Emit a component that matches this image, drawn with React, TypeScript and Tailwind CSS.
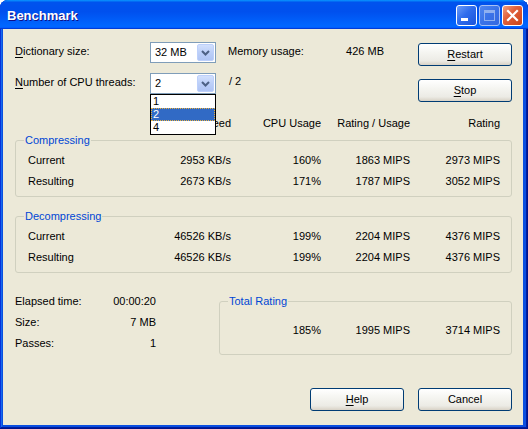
import React from "react";

function Chevron() {
  return (
    <svg width="9" height="6" viewBox="0 0 9 6">
      <path d="M1 1 L4.5 4.5 L8 1" stroke="#4d6185" strokeWidth="2" fill="none" />
    </svg>
  );
}

function Combo({ value, children }: { value: string; children?: React.ReactNode }) {
  return (
    <div className="relative w-[66px] h-[21px]">
      <div className="w-[66px] h-[21px] border border-[#7f9db9] bg-white flex items-stretch p-[1px]">
        <div className="flex-1 pl-[3px] flex items-center text-[11px] leading-[13px] text-black">{value}</div>
        <div className="w-[17px] rounded-[2px] border border-[#bdd0fb] bg-[linear-gradient(180deg,#d2e0fd,#bccff8_50%,#afc4f4)] flex items-center justify-center">
          <Chevron />
        </div>
      </div>
      {children}
    </div>
  );
}

function XPButton({ children }: { children: React.ReactNode }) {
  return (
    <div className="w-[94px] h-[23px] rounded-[3px] border border-[#003c74] bg-[linear-gradient(180deg,#ffffff,#f5f5f1_40%,#ecebe5_80%,#d8d2c6)] flex items-center justify-center text-[11px] leading-[13px] text-black">
      {children}
    </div>
  );
}

function U({ c }: { c: string }) {
  return <span className="underline underline-offset-[2px]">{c}</span>;
}

function DataRow({ label, v }: { label: string; v: string[] }) {
  return (
    <div className="flex items-center h-[21px] text-[11px] leading-[13px]">
      <div className="w-[135px] pl-[12px]">{label}</div>
      <div className="w-[80px] text-right">{v[0]}</div>
      <div className="w-[90px] text-right">{v[1]}</div>
      <div className="w-[89px] text-right">{v[2]}</div>
      <div className="w-[90px] text-right">{v[3]}</div>
    </div>
  );
}

function Group({ title, className, children }: { title: string; className?: string; children: React.ReactNode }) {
  return (
    <fieldset className={`border border-[#d0d0bf] rounded-[3px] ${className ?? ""}`}>
      <legend className="ml-[8px] px-[1px] text-[11px] leading-[14px] text-[#0046d5]">{title}</legend>
      {children}
    </fieldset>
  );
}

export default function App() {
  return (
    <div className="w-[528px] h-[429px] flex flex-col rounded-t-[8px] overflow-hidden bg-[#0a4fe0] shadow-[inset_-1px_-1px_#00138c,inset_1px_1px_#0831d9,inset_-2px_-2px_#001ea0,inset_2px_2px_#166aee] font-['Liberation_Sans',Arial,sans-serif] text-black">
      {/* Title bar */}
      <div className="h-[29px] shrink-0 flex items-start bg-[linear-gradient(180deg,#0997ff,#0053ee_8%,#0050ee_40%,#0066ff_88%,#0066ff_93%,#005bff_95%,#003dd7_96%,#003dd7)]">
        <div className="pl-[7px] pt-[8px] text-white font-bold text-[13px] leading-[15px] [text-shadow:1px_1px_0_#0f1089]">Benchmark</div>
        <div className="ml-auto flex gap-[2px] pt-[5px] pr-[5px]">
          <div className="w-[21px] h-[21px] rounded-[3px] border border-white bg-[linear-gradient(135deg,#6b9cf8,#2f6cec_45%,#1b54db)]">
            <svg width="19" height="19" viewBox="0 0 19 19">
              <rect x="4" y="12" width="7" height="3" fill="#ffffff" />
            </svg>
          </div>
          <div className="w-[21px] h-[21px] rounded-[3px] border border-[#a8c0f4] bg-[linear-gradient(135deg,#4f86f0,#3a72e8_50%,#3468e0)]">
            <svg width="19" height="19" viewBox="0 0 19 19">
              <rect x="4.5" y="4.5" width="10" height="10" fill="none" stroke="#8fb0f0" strokeWidth="1" />
              <rect x="4" y="4" width="11" height="3" fill="#8fb0f0" />
            </svg>
          </div>
          <div className="w-[21px] h-[21px] rounded-[3px] border border-white bg-[linear-gradient(135deg,#f0a080,#e0603c_40%,#cc4418)]">
            <svg width="19" height="19" viewBox="0 0 19 19">
              <path d="M5 5 L14 14 M14 5 L5 14" stroke="#ffffff" strokeWidth="2.2" strokeLinecap="square" />
            </svg>
          </div>
        </div>
      </div>

      {/* Body */}
      <div className="flex-1 flex flex-col ml-[3px] mr-[5px] mb-[4px] bg-[#ece9d8] pl-[12px] pr-[11px] pt-[13px] text-[11px] leading-[13px]">
        {/* Row 1 */}
        <div className="flex items-start h-[31px]">
          <div className="w-[135px] mt-[3px]">
            <U c="D" />ictionary size:
          </div>
          <Combo value="32 MB" />
          <div className="ml-[12px] w-[156px] mt-[3px] flex justify-between">
            <span>Memory usage:</span>
            <span>426 MB</span>
          </div>
          <div className="ml-auto mt-[1px]">
            <XPButton>
              <span>
                <U c="R" />estart
              </span>
            </XPButton>
          </div>
        </div>
        {/* Row 2 */}
        <div className="flex items-start h-[30px] relative z-10">
          <div className="w-[135px] mt-[3px]">
            <U c="N" />umber of CPU threads:
          </div>
          <Combo value="2">
            <div className="absolute left-0 top-[21px] w-[66px] border border-black bg-white">
              <div className="h-[13px] pl-[2px] leading-[13px]">1</div>
              <div className="h-[13px] pl-[1px] leading-[11px] bg-[#316ac5] text-white border border-dotted border-[#e8b040]">2</div>
              <div className="h-[13px] pl-[2px] leading-[13px]">4</div>
            </div>
          </Combo>
          <div className="ml-[13px] mt-[2px]">/ 2</div>
          <div className="ml-auto mt-[6px]">
            <XPButton>
              <span>
                <U c="S" />top
              </span>
            </XPButton>
          </div>
        </div>
        {/* Header */}
        <div className="flex items-center h-[13px] mt-[14px]">
          <div className="w-[136px]"></div>
          <div className="w-[80px] text-right">Speed</div>
          <div className="w-[90px] text-right">CPU Usage</div>
          <div className="w-[89px] text-right">Rating / Usage</div>
          <div className="w-[90px] text-right">Rating</div>
        </div>
        {/* Compressing */}
        <Group title="Compressing" className="mt-[3px]">
          <div className="pt-[3px] pb-[4px]">
            <DataRow label="Current" v={["2953 KB/s", "160%", "1863 MIPS", "2973 MIPS"]} />
            <DataRow label="Resulting" v={["2673 KB/s", "171%", "1787 MIPS", "3052 MIPS"]} />
          </div>
        </Group>
        {/* Decompressing */}
        <Group title="Decompressing" className="mt-[12px]">
          <div className="pt-[3px] pb-[4px]">
            <DataRow label="Current" v={["46526 KB/s", "199%", "2204 MIPS", "4376 MIPS"]} />
            <DataRow label="Resulting" v={["46526 KB/s", "199%", "2204 MIPS", "4376 MIPS"]} />
          </div>
        </Group>
        {/* Bottom section */}
        <div className="flex items-start mt-[18px]">
          <div className="w-[141px] flex flex-col">
            <div className="h-[21px] flex items-center justify-between">
              <span>Elapsed time:</span>
              <span>00:00:20</span>
            </div>
            <div className="h-[21px] flex items-center justify-between">
              <span>Size:</span>
              <span>7 MB</span>
            </div>
            <div className="h-[21px] flex items-center justify-between">
              <span>Passes:</span>
              <span>1</span>
            </div>
          </div>
          <Group title="Total Rating" className="ml-auto mt-[3px] w-[293px]">
            <div className="pt-[12px] pb-[13px] pl-[11px]">
              <div className="flex items-center h-[21px]">
                <div className="w-[90px] text-right">185%</div>
                <div className="w-[89px] text-right">1995 MIPS</div>
                <div className="w-[90px] text-right">3714 MIPS</div>
              </div>
            </div>
          </Group>
        </div>
        {/* Buttons */}
        <div className="flex justify-end gap-[14px] mt-[33px]">
          <XPButton>
            <span>
              <U c="H" />elp
            </span>
          </XPButton>
          <XPButton>Cancel</XPButton>
        </div>
      </div>
    </div>
  );
}
